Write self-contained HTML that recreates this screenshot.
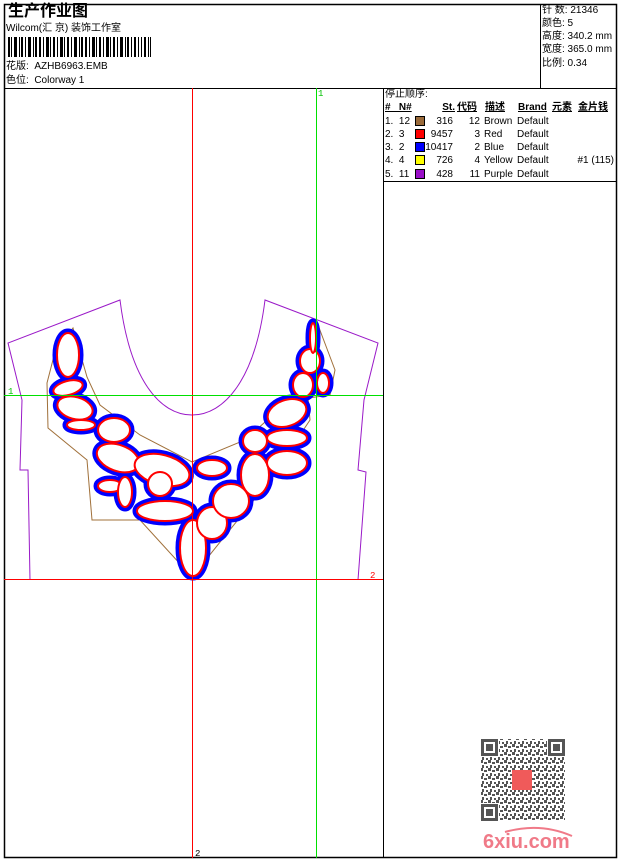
<!DOCTYPE html>
<html><head><meta charset="utf-8"><style>
*{margin:0;padding:0}
body{width:620px;height:860px;background:#fff;position:relative;overflow:hidden;font-family:"Liberation Sans","Noto Sans CJK SC",sans-serif;font-size:10px;color:#000}
.a{position:absolute;white-space:nowrap;line-height:12px}
.r{text-align:right}
.sw{position:absolute;width:10px;height:10px;border:1px solid #000;box-sizing:border-box}
</style></head><body>
<svg width="620" height="860" style="position:absolute;left:0;top:0">
<defs>
<g id="lv">
<ellipse cx="68" cy="355" rx="11" ry="22"/>
<ellipse cx="68" cy="388" rx="15" ry="7" transform="rotate(-15 68 388)"/>
<ellipse cx="75" cy="408" rx="18" ry="11" transform="rotate(15 75 408)"/>
<ellipse cx="81" cy="425" rx="14" ry="5"/>
<ellipse cx="114" cy="430" rx="16" ry="12"/>
<ellipse cx="118" cy="458" rx="22" ry="13" transform="rotate(20 118 458)"/>
<ellipse cx="110" cy="486" rx="12" ry="6"/>
<ellipse cx="125" cy="492" rx="7" ry="15"/>
<ellipse cx="162" cy="470" rx="28" ry="15" transform="rotate(15 162 470)"/>
<ellipse cx="160" cy="484" rx="12" ry="12"/>
<ellipse cx="165" cy="511" rx="28" ry="10"/>
<ellipse cx="193" cy="548" rx="13" ry="28"/>
<ellipse cx="212" cy="523" rx="15" ry="16"/>
<ellipse cx="231" cy="501" rx="18" ry="17"/>
<ellipse cx="212" cy="468" rx="15" ry="8"/>
<ellipse cx="255" cy="475" rx="14" ry="21"/>
<ellipse cx="287" cy="463" rx="20" ry="12"/>
<ellipse cx="255" cy="441" rx="12" ry="11"/>
<ellipse cx="287" cy="438" rx="20" ry="8"/>
<ellipse cx="287" cy="413" rx="20" ry="13" transform="rotate(-20 287 413)"/>
<ellipse cx="303" cy="385" rx="10" ry="12"/>
<ellipse cx="323" cy="383" rx="6" ry="10"/>
<ellipse cx="310" cy="361" rx="10" ry="12"/>
<ellipse cx="313" cy="338" rx="3" ry="15"/>
</g>
<pattern id="qr" width="8" height="8" patternUnits="userSpaceOnUse">
<rect x="0" y="0" width="3" height="3" fill="#555"/><rect x="4" y="2" width="3" height="2" fill="#555"/><rect x="2" y="5" width="2" height="3" fill="#555"/><rect x="6" y="6" width="2" height="2" fill="#555"/>
</pattern>
</defs>
<rect x="4.5" y="4.5" width="612" height="853" fill="none" stroke="#000" stroke-width="1.5"/>
<line x1="4" y1="88.5" x2="617" y2="88.5" stroke="#000"/>
<line x1="540.5" y1="4" x2="540.5" y2="88" stroke="#000"/>
<line x1="383.5" y1="88" x2="383.5" y2="858" stroke="#000"/>
<line x1="384" y1="181.5" x2="617" y2="181.5" stroke="#000"/>
<g fill="#000">
<rect x="8" y="37" width="2" height="20"/><rect x="11" y="37" width="1" height="20"/><rect x="14" y="37" width="3" height="20"/><rect x="19" y="37" width="1" height="20"/><rect x="21" y="37" width="2" height="20"/><rect x="25" y="37" width="1" height="20"/><rect x="28" y="37" width="3" height="20"/><rect x="33" y="37" width="1" height="20"/><rect x="35" y="37" width="2" height="20"/><rect x="39" y="37" width="2" height="20"/><rect x="43" y="37" width="1" height="20"/><rect x="46" y="37" width="3" height="20"/><rect x="50" y="37" width="1" height="20"/><rect x="53" y="37" width="2" height="20"/><rect x="57" y="37" width="1" height="20"/><rect x="60" y="37" width="3" height="20"/><rect x="64" y="37" width="1" height="20"/><rect x="67" y="37" width="2" height="20"/><rect x="71" y="37" width="1" height="20"/><rect x="74" y="37" width="3" height="20"/><rect x="79" y="37" width="1" height="20"/><rect x="81" y="37" width="2" height="20"/><rect x="85" y="37" width="2" height="20"/><rect x="89" y="37" width="1" height="20"/><rect x="92" y="37" width="3" height="20"/><rect x="96" y="37" width="1" height="20"/><rect x="99" y="37" width="2" height="20"/><rect x="103" y="37" width="1" height="20"/><rect x="106" y="37" width="3" height="20"/><rect x="110" y="37" width="1" height="20"/><rect x="113" y="37" width="2" height="20"/><rect x="117" y="37" width="1" height="20"/><rect x="120" y="37" width="3" height="20"/><rect x="125" y="37" width="1" height="20"/><rect x="127" y="37" width="2" height="20"/><rect x="131" y="37" width="1" height="20"/><rect x="134" y="37" width="2" height="20"/><rect x="138" y="37" width="1" height="20"/><rect x="141" y="37" width="1" height="20"/><rect x="144" y="37" width="2" height="20"/><rect x="148" y="37" width="1" height="20"/><rect x="150" y="37" width="1" height="20"/>
</g>
<path d="M30,580 L28,470 L20,470 L22,400 L8,343 L120,300 C130,380 160,415 192,415 C224,415 255,380 265,300 L378,343 L364,400 L358,470 L366,472 L358,580" fill="none" stroke="#9a19c8" stroke-width="1"/>
<path d="M73,328 L87,377 L100,405 L140,435 L192,462 L245,440 L295,395 L312,335 L318,325 L335,370 L330,395 L308,398 L310,420 L270,480 L192,577 L140,520 L92,520 L87,460 L48,428 L47,383 L55,352 Z" fill="none" stroke="#a0703a" stroke-width="1"/>
<use href="#lv" fill="#fff" stroke="#0000ff" stroke-width="9"/>
<use href="#lv" fill="#fff" stroke="#ff0000" stroke-width="2"/>
<line x1="192.5" y1="88" x2="192.5" y2="858" stroke="#ff0000"/>
<line x1="316.5" y1="88" x2="316.5" y2="858" stroke="#00e000"/>
<line x1="4" y1="395.5" x2="383" y2="395.5" stroke="#00e000"/>
<line x1="4" y1="579.5" x2="383" y2="579.5" stroke="#ff0000"/>
<text x="8" y="394" font-size="9" fill="#00c000" font-family="Liberation Mono">1</text>
<text x="318" y="96" font-size="9" fill="#00c000" font-family="Liberation Mono">1</text>
<text x="370" y="578" font-size="9" fill="#ff0000" font-family="Liberation Mono">2</text>
<text x="195" y="856" font-size="9" fill="#000" font-family="Liberation Mono">2</text>
<rect x="481" y="739" width="84" height="82" fill="url(#qr)"/>
<g fill="#555">
<rect x="480" y="738" width="19" height="19" fill="#fff"/><rect x="547" y="738" width="19" height="19" fill="#fff"/><rect x="480" y="803" width="19" height="19" fill="#fff"/>
<rect x="481" y="739" width="17" height="17"/><rect x="484" y="742" width="11" height="11" fill="#fff"/><rect x="486" y="744" width="7" height="7"/>
<rect x="548" y="739" width="17" height="17"/><rect x="551" y="742" width="11" height="11" fill="#fff"/><rect x="553" y="744" width="7" height="7"/>
<rect x="481" y="804" width="17" height="17"/><rect x="484" y="807" width="11" height="11" fill="#fff"/><rect x="486" y="809" width="7" height="7"/>
</g>
<rect x="512" y="770" width="20" height="20" fill="#f05a5a"/>
<text x="483" y="848" font-size="20" font-weight="bold" fill="#f07a88" font-family="Liberation Sans">6xiu.com</text>
<path d="M505,832 Q540,822 572,836" stroke="#f07a88" stroke-width="2" fill="none"/>
</svg>
<div class="a" style="left:8px;top:3px;font-size:16px;font-weight:bold;line-height:18px">生产作业图</div>
<div class="a" style="left:6px;top:23px">Wilcom(汇 京) 装饰工作室</div>
<div class="a" style="left:6px;top:61px">花版:&nbsp; AZHB6963.EMB</div>
<div class="a" style="left:6px;top:75px">色位:&nbsp; Colorway 1</div>
<div class="a" style="left:542px;top:5px">针 数: 21346</div>
<div class="a" style="left:542px;top:18px">颜色: 5</div>
<div class="a" style="left:542px;top:31px">高度: 340.2 mm</div>
<div class="a" style="left:542px;top:44px">宽度: 365.0 mm</div>
<div class="a" style="left:542px;top:58px">比例: 0.34</div>
<div class="a" style="left:385px;top:89px">停止顺序:</div>
<div class="a" style="left:385px;top:102px;font-weight:bold;text-decoration:underline">#&nbsp;&nbsp; N#</div>
<div class="a r" style="left:430px;width:25px;top:102px;font-weight:bold;text-decoration:underline">St.</div>
<div class="a" style="left:457px;top:102px;font-weight:bold;text-decoration:underline">代码</div>
<div class="a" style="left:485px;top:102px;font-weight:bold;text-decoration:underline">描述</div>
<div class="a" style="left:518px;top:102px;font-weight:bold;text-decoration:underline">Brand</div>
<div class="a" style="left:552px;top:102px;font-weight:bold;text-decoration:underline">元素</div>
<div class="a" style="left:578px;top:102px;font-weight:bold;text-decoration:underline">金片钱</div>
<div class="a" style="left:385px;top:116px">1.&nbsp; 12</div><div class="sw" style="left:415px;top:116px;background:#9a6a3a"></div><div class="a r" style="left:425px;width:28px;top:116px">316</div><div class="a r" style="left:455px;width:25px;top:116px">12</div><div class="a" style="left:484px;top:116px">Brown</div><div class="a" style="left:517px;top:116px">Default</div>
<div class="a" style="left:385px;top:129px">2.&nbsp; 3</div><div class="sw" style="left:415px;top:129px;background:#ff0000"></div><div class="a r" style="left:425px;width:28px;top:129px">9457</div><div class="a r" style="left:455px;width:25px;top:129px">3</div><div class="a" style="left:484px;top:129px">Red</div><div class="a" style="left:517px;top:129px">Default</div>
<div class="a" style="left:385px;top:142px">3.&nbsp; 2</div><div class="sw" style="left:415px;top:142px;background:#0000ff"></div><div class="a r" style="left:425px;width:28px;top:142px">10417</div><div class="a r" style="left:455px;width:25px;top:142px">2</div><div class="a" style="left:484px;top:142px">Blue</div><div class="a" style="left:517px;top:142px">Default</div>
<div class="a" style="left:385px;top:155px">4.&nbsp; 4</div><div class="sw" style="left:415px;top:155px;background:#ffff00"></div><div class="a r" style="left:425px;width:28px;top:155px">726</div><div class="a r" style="left:455px;width:25px;top:155px">4</div><div class="a" style="left:484px;top:155px">Yellow</div><div class="a" style="left:517px;top:155px">Default</div><div class="a r" style="left:560px;width:54px;top:155px">#1 (115)</div>
<div class="a" style="left:385px;top:169px">5.&nbsp; 11</div><div class="sw" style="left:415px;top:169px;background:#9a10c8"></div><div class="a r" style="left:425px;width:28px;top:169px">428</div><div class="a r" style="left:455px;width:25px;top:169px">11</div><div class="a" style="left:484px;top:169px">Purple</div><div class="a" style="left:517px;top:169px">Default</div>
</body></html>
